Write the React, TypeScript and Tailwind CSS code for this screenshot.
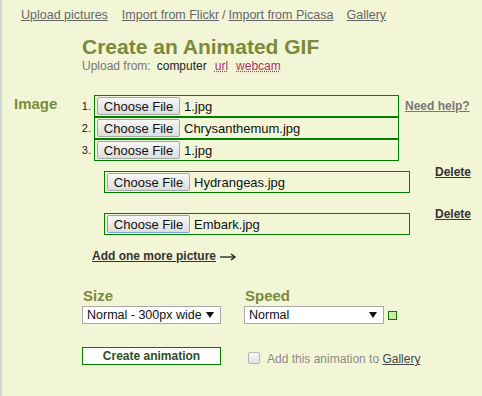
import React from 'react';

const files = ['1.jpg', 'Chrysanthemum.jpg', '1.jpg'];
const extra = ['Hydrangeas.jpg', 'Embark.jpg'];

const FileButton: React.FC<{ focused?: boolean }> = ({ focused }) => (
  <span
    className={`flex h-[18px] w-[83px] shrink-0 items-center justify-center rounded-[2px] border bg-gradient-to-b from-[#f6f6f6] to-[#dedede] text-[13px] leading-[15px] text-[#111] ${
      focused ? 'border-[#7ea6d8]' : 'border-[#a6a6a6]'
    }`}
  >
    Choose File
  </span>
);

const FileBox: React.FC<{ name: string; width: string; focused?: boolean }> = ({ name, width, focused }) => (
  <div className={`flex h-[22px] ${width} items-center border border-[#008000] pl-[2px]`}>
    <FileButton focused={focused} />
    <span className="ml-[4px] text-[13px] leading-[15px] text-[#111]">{name}</span>
  </div>
);

const Arrow = () => (
  <svg width="16" height="8" viewBox="0 0 16 8" className="ml-[4px]">
    <path d="M0 4h14.5" stroke="#111" strokeWidth="1.2" />
    <path d="M11 1l4 3-4 3" fill="none" stroke="#111" strokeWidth="1.2" />
  </svg>
);

const SelectBox: React.FC<{ value: string; width: string }> = ({ value, width }) => (
  <div className={`flex h-[18px] ${width} items-center justify-between border border-[#a9a9a9] bg-white pl-[4px] pr-[6px]`}>
    <span className="whitespace-nowrap text-[12.5px] leading-[15px] text-[#111]">{value}</span>
    <svg width="8" height="6" viewBox="0 0 8 6" className="shrink-0">
      <path d="M0 0h8L4 6z" fill="#111" />
    </svg>
  </div>
);

export default function App() {
  return (
    <div className="h-[396px] w-[482px] overflow-hidden border-l-2 border-[#cbd8d4] bg-[#f3f6d6] font-['Liberation_Sans',Arial,sans-serif]">
      {/* top links */}
      <nav className="flex pl-[19px] pt-[8px] text-[12.5px] leading-[15px] text-[#666]">
        <a className="underline">Upload pictures</a>
        <a className="ml-[14px] underline">Import from Flickr</a>
        <span className="mx-[3px]">/</span>
        <a className="underline">Import from Picasa</a>
        <a className="ml-[13px] underline">Gallery</a>
      </nav>

      <div className="mt-[12px] pl-[80px]">
        <h1 className="text-[21px] font-bold leading-[24px] text-[#7a8a3c]">Create an Animated GIF</h1>
        <div className="flex text-[12px] leading-[15px] text-[#777]">
          <span>Upload from:</span>
          <span className="ml-[6px] text-[#222]">computer</span>
          <span className="ml-[8px] text-[#b0306a] underline decoration-dotted">url</span>
          <span className="ml-[8px] text-[#b0306a] underline decoration-dotted">webcam</span>
        </div>
      </div>

      {/* image rows */}
      <div className="mt-[21px] flex items-start">
        <div className="w-[68px] pl-[12px] text-[15px] font-bold leading-[18px] text-[#7a8a3c]">Image</div>
        <div className="flex flex-col">
          {files.map((f, i) => (
            <div key={i} className="flex items-center">
              <span className="w-[24px] pr-[3px] text-right text-[11px] leading-[13px] text-[#222]">{i + 1}.</span>
              <FileBox name={f} width="w-[305px]" />
              {i === 0 && (
                <a className="ml-[6px] text-[12px] font-bold leading-[14px] text-[#777] underline">Need help?</a>
              )}
            </div>
          ))}
        </div>
      </div>

      <div className="mt-[4px] flex flex-col gap-[14px] pl-[102px]">
        {extra.map((f, i) => (
          <div key={i} className="flex items-start">
            <div className="mt-[6px]">
              <FileBox name={f} width="w-[306px]" focused={i === 1} />
            </div>
            <a className="ml-[25px] text-[12px] font-bold leading-[14px] text-[#333] underline">Delete</a>
          </div>
        ))}
      </div>

      <div className="mt-[14px] flex items-center pl-[90px]">
        <a className="text-[12px] font-bold leading-[15px] text-[#333] underline">Add one more picture</a>
        <Arrow />
      </div>

      {/* options */}
      <div className="mt-[23px] flex gap-[23px] pl-[80px]">
        <div className="flex flex-col">
          <span className="pl-[1px] text-[15px] font-bold leading-[18px] text-[#7a8a3c]">Size</span>
          <div className="mt-[1px]">
            <SelectBox value="Normal - 300px wide" width="w-[139px]" />
          </div>
        </div>
        <div className="flex flex-col">
          <span className="pl-[1px] text-[15px] font-bold leading-[18px] text-[#7a8a3c]">Speed</span>
          <div className="mt-[1px] flex items-center">
            <SelectBox value="Normal" width="w-[140px]" />
            <span className="ml-[4px] h-[9px] w-[9px] border border-[#008000] bg-[#cfe8a4]" />
          </div>
        </div>
      </div>

      <div className="mt-[23px] flex items-start pl-[80px]">
        <button className="flex h-[18px] w-[139px] items-center justify-center border border-[#008000] bg-white text-[12px] font-bold leading-[15px] text-[#2d4f26]">
          Create animation
        </button>
        <span className="ml-[27px] mt-[5px] h-[12px] w-[12px] rounded-[2px] border border-[#b5b5b5] bg-gradient-to-b from-[#fafafa] to-[#e2e2e2]" />
        <span className="ml-[7px] mt-[5px] text-[12px] leading-[15px] text-[#8a8a8a]">
          Add this animation to <a className="text-[#444] underline">Gallery</a>
        </span>
      </div>
    </div>
  );
}
